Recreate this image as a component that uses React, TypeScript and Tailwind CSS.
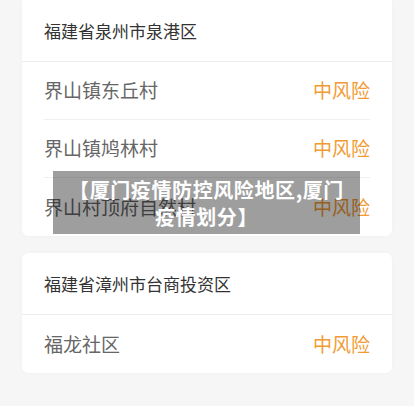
const groups = [
  {
    city: "福建省泉州市泉港区",
    places: ["界山镇东丘村", "界山镇鸠林村", "界山村顶府自然村"],
  },
  {
    city: "福建省漳州市台商投资区",
    places: ["福龙社区"],
  },
];

const App = () => {
  return (
    <div
      className="relative w-[414px] h-[406px] overflow-hidden bg-[#f6f6f6] px-[22px] flex flex-col gap-[17px]"
      style={{ fontFamily: '"Noto Sans CJK SC", "Noto Sans", sans-serif' }}
    >
      {groups.map((g, i) => (
        <div
          key={g.city}
          className={`bg-white shadow-[0_0_4px_rgba(0,0,0,0.03)] ${
            i === 0 ? "rounded-b-md" : "rounded-md"
          }`}
        >
          <div className="h-[62px] flex items-center px-[22px] border-b border-[#ececec] text-[17px] text-[#333]">
            {g.city}
          </div>
          <div className="px-[22px]">
            {g.places.map((p, j) => (
              <div
                key={p}
                className={`h-[58px] flex items-center justify-between ${
                  j < g.places.length - 1 ? "border-b border-[#efefef]" : "h-[57px]"
                }`}
              >
                <span className="text-[19px] text-[#666]">{p}</span>
                <span className="text-[19px] text-[#f29b34]">中风险</span>
              </div>
            ))}
          </div>
        </div>
      ))}

      {/* title overlay */}
      <div className="absolute left-[53px] top-[171px] w-[307px] h-[63px] bg-black/[0.38] flex items-center justify-center">
        <p className="text-white font-bold text-[20px] leading-[27px] tracking-[0.6px] text-center">
          【厦门疫情防控风险地区,厦门
          <br />
          疫情划分】
        </p>
      </div>
    </div>
  );
};

export default App;
